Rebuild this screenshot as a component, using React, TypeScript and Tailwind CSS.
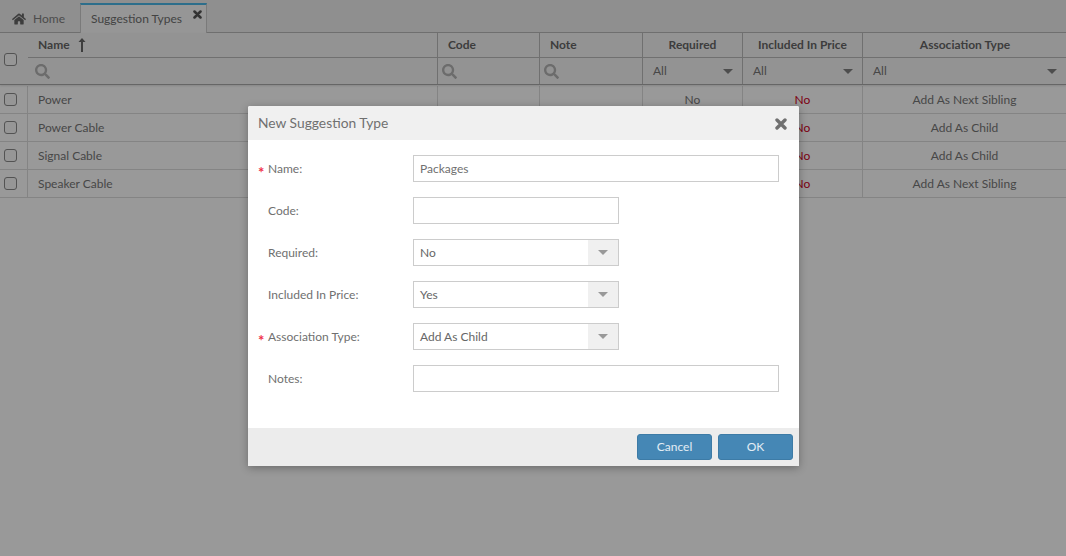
import { FaHome, FaSearch } from "react-icons/fa";

const HEAD_COLS = "grid grid-cols-[409px_102px_103px_100px_120px_1fr]";
const ROW_COLS = "grid grid-cols-[27px_410px_102px_103px_100px_120px_1fr]";

const rows = [
  { name: "Power", required: "No", assoc: "Add As Next Sibling" },
  { name: "Power Cable", required: "No", assoc: "Add As Child" },
  { name: "Signal Cable", required: "No", assoc: "Add As Child" },
  { name: "Speaker Cable", required: "No", assoc: "Add As Next Sibling" },
];

function Check() {
  return <span className="block w-[13px] h-[13px] rounded-[3px] border border-[#8a8a8a] bg-[#fafafa]" />;
}

function Caret({ className }: { className?: string }) {
  return (
    <svg width="10" height="5" viewBox="0 0 10 5" className={className}>
      <path d="M0 0h10L5 5z" fill="currentColor" />
    </svg>
  );
}

function CloseIcon({ size, className }: { size: number; className?: string }) {
  return (
    <svg width={size} height={size} viewBox="0 0 12 12" className={className}>
      <path d="M2 2l8 8M10 2l-8 8" stroke="currentColor" strokeWidth="3.4" strokeLinecap="round" />
    </svg>
  );
}

function FilterSearch() {
  return (
    <div className="border-l border-[#bbb] flex items-center pl-[4px]">
      <FaSearch className="text-[#b4b4b4] text-[15px]" />
    </div>
  );
}

function FilterSelect() {
  return (
    <div className="border-l border-[#bbb] flex items-center justify-between pl-[10px] pr-[9px] text-[12px] text-[#777]">
      <span>All</span>
      <Caret className="text-[#808080]" />
    </div>
  );
}

function Field({ label, required, children }: { label: string; required?: boolean; children: React.ReactNode }) {
  return (
    <div className="flex items-center h-[27px] mb-[15px] pl-[10px]">
      <span className="w-[10px] text-[#f0304a] text-[15px] font-bold leading-none mt-[7px]">{required ? "*" : ""}</span>
      <label className="w-[145px] text-[12px] text-[#707070]">{label}</label>
      {children}
    </div>
  );
}

function TextBox({ value, full }: { value?: string; full?: boolean }) {
  return (
    <div className={`h-[27px] border border-[#ccc] bg-white px-[6px] flex items-center text-[12px] text-[#707070] ${full ? "w-[366px]" : "w-[206px]"}`}>
      {value}
    </div>
  );
}

function SelectBox({ value }: { value: string }) {
  return (
    <div className="h-[27px] w-[206px] border border-[#ccc] bg-white flex text-[12px] text-[#666]">
      <span className="flex-1 pl-[6px] flex items-center">{value}</span>
      <span className="w-[30px] bg-[#f0f0f0] flex items-center justify-center">
        <Caret className="text-[#999]" />
      </span>
    </div>
  );
}

export default function App() {
  return (
    <div className="relative w-[1066px] h-[556px] overflow-hidden bg-white font-['Lato','Noto_Sans',sans-serif] text-[#666]">
      <div className="h-[33px] bg-[#eeeeee] border-b border-[#bbb] flex items-end pl-[12px]">
        <div className="flex items-center gap-[7px] h-[32px] pt-[5px] w-[68px] text-[12px] text-[#808080]">
          <FaHome className="text-[14px] text-[#666]" />
          <span>Home</span>
        </div>
        <div className="relative h-[30px] w-[127px] -mb-px bg-[#fafafa] border-t-2 border-t-[#4cb8e8] border-x border-x-[#ccc] flex items-center pl-[10px] text-[12px] text-[#707070]">
          Suggestion Types
          <CloseIcon size={9} className="absolute right-[4px] top-[5px] text-[#555]" />
        </div>
      </div>

      <div className="relative z-10 flex h-[52px] bg-[#f6f6f6] border-b border-[#aaa] shadow-[0_1px_2px_rgba(0,0,0,0.12)] text-[12px]">
        <div className="w-[28px] flex items-center pl-[4px] pt-[1px]"><Check /></div>
        <div className="flex-1 flex flex-col">
          <div className={`${HEAD_COLS} h-[25px] border-b border-[#bbb] font-bold text-[#666]`}>
            <div className="flex items-center pl-[10px] gap-[8px]">
              Name
              <svg width="8" height="14" viewBox="0 0 8 14" className="text-[#666]">
                <path d="M4 0 7.5 4H5v10H3V4H.5z" fill="currentColor" />
              </svg>
            </div>
            <div className="border-l border-[#bbb] flex items-center pl-[10px]">Code</div>
            <div className="border-l border-[#bbb] flex items-center pl-[10px]">Note</div>
            <div className="border-l border-[#bbb] flex items-center justify-center">Required</div>
            <div className="border-l border-[#bbb] flex items-center justify-center">Included In Price</div>
            <div className="border-l border-[#bbb] flex items-center justify-center pl-[1px]">Association Type</div>
          </div>
          <div className={`${HEAD_COLS} flex-1`}>
            <div className="flex items-center pl-[7px]"><FaSearch className="text-[#b4b4b4] text-[15px]" /></div>
            <FilterSearch />
            <FilterSearch />
            <FilterSelect />
            <FilterSelect />
            <FilterSelect />
          </div>
        </div>
      </div>

      <div className="bg-white pt-[1px]">
        {rows.map((r) => (
          <div key={r.name} className={`${ROW_COLS} h-[28px] border-b border-[#ddd] text-[12px] text-[#777]`}>
            <div className="flex items-center pl-[4px]"><Check /></div>
            <div className="border-l border-[#ddd] flex items-center pl-[10px]">{r.name}</div>
            <div className="border-l border-[#ddd]" />
            <div className="border-l border-[#ddd]" />
            <div className="border-l border-[#ddd] flex items-center justify-center">{r.required}</div>
            <div className="border-l border-[#ddd] flex items-center justify-center text-[#d0021b]">No</div>
            <div className="border-l border-[#ddd] flex items-center justify-center">{r.assoc}</div>
          </div>
        ))}
      </div>

      <div className="absolute inset-0 z-20 bg-black/40" />

      <div className="absolute z-30 left-[248px] top-[106px] w-[551px] h-[360px] bg-white rounded-[2px] shadow-[0_2px_8px_rgba(0,0,0,0.3)] flex flex-col">
        <div className="h-[34px] bg-[#f0f0f0] flex items-center justify-between pl-[10px] pr-[12px] text-[13.8px] text-[#707070] rounded-t-[2px]">
          New Suggestion Type
          <CloseIcon size={12} className="text-[#707070] mt-[1px]" />
        </div>
        <div className="flex-1 pt-[15px]">
          <Field label="Name:" required><TextBox value="Packages" full /></Field>
          <Field label="Code:"><TextBox /></Field>
          <Field label="Required:"><SelectBox value="No" /></Field>
          <Field label="Included In Price:"><SelectBox value="Yes" /></Field>
          <Field label="Association Type:" required><SelectBox value="Add As Child" /></Field>
          <Field label="Notes:"><TextBox full /></Field>
        </div>
        <div className="h-[38px] bg-[#ececec] flex items-center justify-end gap-[6px] pr-[6px]">
          <button className="w-[75px] h-[26px] rounded-[3px] bg-[#4587b5] border border-[#3d7ba6] text-white/85 text-[12px]">Cancel</button>
          <button className="w-[75px] h-[26px] rounded-[3px] bg-[#4587b5] border border-[#3d7ba6] text-white/85 text-[12px]">OK</button>
        </div>
      </div>
    </div>
  );
}
